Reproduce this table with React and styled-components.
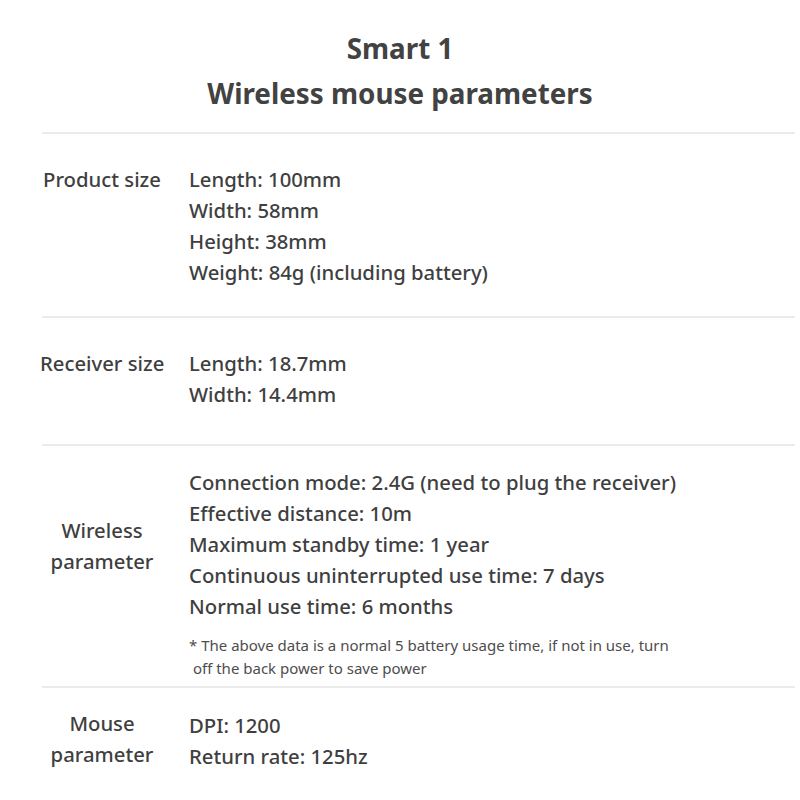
import React from 'react';
import styled, { createGlobalStyle } from 'styled-components';

const GlobalStyle = createGlobalStyle`
  html, body {
    margin: 0;
    padding: 0;
    background: #fff;
  }
  body {
    font-family: "Noto Sans", "Open Sans", sans-serif;
    color: #3f3f3f;
  }
`;

const Page = styled.div`
  width: 800px;
  height: 800px;
  overflow: hidden;
  background: #fff;
`;

const Header = styled.header`
  display: flex;
  flex-direction: column;
  align-items: center;
  padding: 26px 0 16px;
`;

const Title = styled.h1`
  margin: 0;
  font-size: 27.8px;
  font-weight: 700;
  line-height: 45px;
  color: #424242;
`;

const Row = styled.section`
  display: flex;
  align-items: flex-start;
  margin: 0 5px 0 42px;
  padding: ${({ pad }) => pad};
  border-top: 2px solid #ebebeb;
`;

const Label = styled.div`
  width: 124px;
  margin-left: -2px;
  flex-shrink: 0;
  text-align: center;
  font-size: 20.3px;
  font-weight: 500;
  line-height: 31px;
  white-space: nowrap;
  margin-top: ${({ offset }) => offset || 0}px;
`;

const Values = styled.div`
  margin-left: 25px;
  display: flex;
  flex-direction: column;
`;

const Value = styled.div`
  font-size: 20.3px;
  font-weight: 500;
  line-height: 31px;
  white-space: nowrap;
`;

const Note = styled.p`
  margin: 12px 0 0;
  font-size: 15px;
  font-weight: 400;
  line-height: 23px;
  color: #4d4d4d;
`;

const rows = [
  {
    label: ['Product size'],
    values: ['Length: 100mm', 'Width: 58mm', 'Height: 38mm', 'Weight: 84g (including battery)'],
    pad: '30px 0 28px',
  },
  {
    label: ['Receiver size'],
    values: ['Length: 18.7mm', 'Width: 14.4mm'],
    pad: '30px 0 34px',
  },
  {
    label: ['Wireless', 'parameter'],
    values: [
      'Connection mode: 2.4G (need to plug the receiver)',
      'Effective distance: 10m',
      'Maximum standby time: 1 year',
      'Continuous uninterrupted use time: 7 days',
      'Normal use time: 6 months',
    ],
    note: true,
    labelOffset: 48,
    pad: '21px 0 6px',
  },
  {
    label: ['Mouse', 'parameter'],
    values: ['DPI: 1200', 'Return rate: 125hz'],
    labelOffset: -2,
    pad: '22px 0 0',
  },
];

export default function App() {
  return (
    <Page>
      <GlobalStyle />
      <Header>
        <Title>Smart 1</Title>
        <Title>Wireless mouse parameters</Title>
      </Header>
      {rows.map((row) => (
        <Row key={row.label.join(' ')} pad={row.pad}>
          <Label offset={row.labelOffset}>
            {row.label.map((l) => (
              <div key={l}>{l}</div>
            ))}
          </Label>
          <Values>
            {row.values.map((v) => (
              <Value key={v}>{v}</Value>
            ))}
            {row.note && (
              <Note>
                * The above data is a normal 5 battery usage time, if not in use, turn
                <br />
                &nbsp;off the back power to save power
              </Note>
            )}
          </Values>
        </Row>
      ))}
    </Page>
  );
}
